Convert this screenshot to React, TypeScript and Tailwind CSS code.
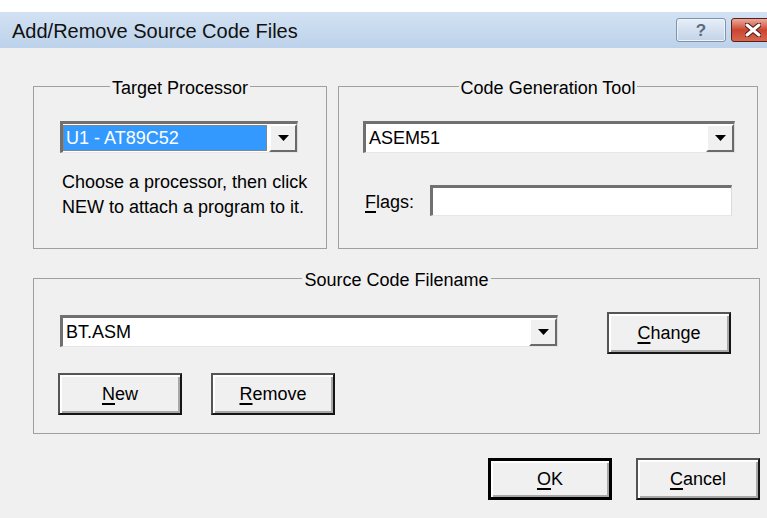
import React from 'react'

// Small black dropdown arrow used by every combo box
const Arrow = () => (
  <svg width="11" height="6" viewBox="0 0 11 6">
    <path d="M0 0h11L5.5 6z" fill="#000" />
  </svg>
)

const DropButton = () => (
  <div className="w-[28px] h-full shrink-0 flex items-center justify-center bg-[#f0f0f0] border-2 border-t-white border-l-white border-r-[#6a6a6a] border-b-[#6a6a6a]">
    <Arrow />
  </div>
)

interface ComboProps {
  value: string
  className: string
  selected?: boolean
}

const ComboBox: React.FC<ComboProps> = ({ value, className, selected }) => (
  <div
    className={`flex h-[32px] bg-white border-t-[3px] border-l-[3px] border-r border-b border-t-[#707070] border-l-[#707070] border-r-[#dadada] border-b-[#e6e6e6] ${className}`}
  >
    <div className="flex-1 min-w-0 flex items-stretch pr-[2px]">
      {selected ? (
        <div className="flex-1 flex items-center my-[1px] pl-[3px] bg-[#3399ff] text-white outline-1 outline-dotted outline-[#c27a2a] -outline-offset-1">
          {value}
        </div>
      ) : (
        <div className="flex-1 flex items-center pl-[3px]">{value}</div>
      )}
    </div>
    <DropButton />
  </div>
)

interface ButtonProps {
  children: React.ReactNode
  isDefault?: boolean
  className?: string
}

const Button: React.FC<ButtonProps> = ({ children, isDefault, className = '' }) => (
  <button
    className={`w-[124px] h-[42px] shrink-0 bg-[#f0f0f0] text-black text-[18px] leading-none ${
      isDefault
        ? 'border-[3px] border-black'
        : 'border-2 border-t-[#555] border-l-[#555] border-r-[#151515] border-b-[#151515]'
    } shadow-[inset_2px_2px_0_#ffffff,inset_-2px_-2px_0_#a8a8a8] ${className}`}
  >
    {children}
  </button>
)

const Key: React.FC<{ children: React.ReactNode }> = ({ children }) => (
  <span className="underline decoration-[1.5px] underline-offset-[3px]">{children}</span>
)

const GroupBox: React.FC<{ title: string; className: string; children: React.ReactNode }> = ({
  title,
  className,
  children
}) => (
  <fieldset className={`m-0 p-0 min-w-0 border border-[#a0a0a0] ${className}`}>
    <legend className="mx-auto px-[2px] text-[18px] leading-[20px] translate-y-[2px]">{title}</legend>
    {children}
  </fieldset>
)

export default function App() {
  return (
    <div className="w-[767px] h-[518px] overflow-hidden flex flex-col bg-white text-black font-['Liberation_Sans',Arial,sans-serif]">
      <div className="h-[12px] bg-white" />

      {/* title bar */}
      <div className="h-[36px] flex items-center justify-between pl-[12px] bg-gradient-to-b from-[#d3e2f3] to-[#bcd2ea]">
        <span className="text-[20px] text-[#111] pt-[2px]">Add/Remove Source Code Files</span>
        <div className="flex items-center gap-[5px] -mr-[8px]">
          <div className="w-[50px] h-[24px] rounded-[3px] border border-[#7f93ad] bg-gradient-to-b from-[#e6eef8] to-[#c3d3e8] flex items-center justify-center shadow-[inset_0_0_0_1px_#eef3fa]">
            <span className="text-[17px] font-bold text-[#5a6a80] leading-none">?</span>
          </div>
          <div className="w-[44px] h-[24px] rounded-[3px] border border-[#5a2018] bg-gradient-to-b from-[#e9a99c] via-[#c9452f] to-[#d8664f] flex items-center justify-center">
            <svg width="16" height="14" viewBox="0 0 16 14">
              <path d="M2 2l12 10M14 2L2 12" stroke="#4a1a14" strokeWidth="5" strokeLinecap="round" />
              <path d="M2 2l12 10M14 2L2 12" stroke="#fff" strokeWidth="3" strokeLinecap="round" />
            </svg>
          </div>
        </div>
      </div>

      {/* dialog body */}
      <div className="flex-1 bg-[#f0f0f0] pt-[28px] pl-[33px] pr-[7px] text-[18px]">
        <div className="flex gap-[11px]">
          <GroupBox title="Target Processor" className="w-[294px] h-[173px]">
            <div className="pl-[26px] pt-[25px]">
              <ComboBox value="U1 - AT89C52" className="w-[238px]" selected />
              <p className="mt-[17px] ml-[2px] leading-[25px]">
                Choose a processor, then click
                <br />
                NEW to attach a program to it.
              </p>
            </div>
          </GroupBox>

          <GroupBox title="Code Generation Tool" className="w-[420px] h-[173px]">
            <div className="pl-[24px] pt-[25px]">
              <ComboBox value="ASEM51" className="w-[372px]" />
              <div className="mt-[32px] flex items-center">
                <span className="w-[67px] pl-[2px] pt-[4px]">
                  <Key>F</Key>lags:
                </span>
                <div className="w-[302px] h-[31px] bg-white border-t-[3px] border-l-[3px] border-r border-b border-t-[#707070] border-l-[#707070] border-r-[#dadada] border-b-[#e6e6e6]" />
              </div>
            </div>
          </GroupBox>
        </div>

        <GroupBox title="Source Code Filename" className="w-[727px] h-[166px] mt-[19px]">
          <div className="pl-[26px]">
            <div className="flex items-start">
              <ComboBox value="BT.ASM" className="w-[498px] mt-[27px]" />
              <Button className="ml-[49px] mt-[24px]">
                <Key>C</Key>hange
              </Button>
            </div>
            <div className="flex gap-[29px] mt-[19px] -ml-[2px]">
              <Button>
                <Key>N</Key>ew
              </Button>
              <Button>
                <Key>R</Key>emove
              </Button>
            </div>
          </div>
        </GroupBox>

        <div className="flex justify-end gap-[24px] mt-[24px]">
          <Button isDefault>
            <Key>O</Key>K
          </Button>
          <Button>
            <Key>C</Key>ancel
          </Button>
        </div>
      </div>
    </div>
  )
}
